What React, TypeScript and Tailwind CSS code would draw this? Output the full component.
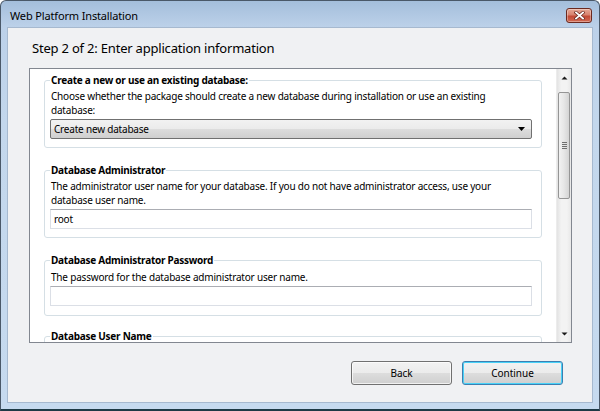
import React from "react";

const font = "font-['Noto_Sans',_'Liberation_Sans',_sans-serif]";

function CloseButton() {
  return (
    <div className="w-[26px] h-[15px] rounded-[3px] border border-[#6b2a20] bg-[linear-gradient(to_bottom,#e6a896_0%,#d8826e_45%,#c24a36_55%,#d26a52_100%)] flex items-center justify-center shadow-[inset_0_0_0_1px_rgba(255,255,255,0.35)]">
      <svg width="11" height="9" viewBox="0 0 11 9">
        <path d="M2 1.5 L9 7.5 M9 1.5 L2 7.5" stroke="#6b2a20" strokeWidth="3.2" strokeLinecap="square" />
        <path d="M2 1.5 L9 7.5 M9 1.5 L2 7.5" stroke="#ffffff" strokeWidth="1.8" strokeLinecap="square" />
      </svg>
    </div>
  );
}

function Scrollbar() {
  return (
    <div className="w-[15px] flex flex-col bg-[linear-gradient(to_right,#e3e3e3,#f3f3f3_30%,#f3f3f3_70%,#e8e8e8)] border-l border-[#ececec]">
      <div className="h-[17px] flex items-center justify-center">
        <svg width="7" height="4" viewBox="0 0 7 4">
          <path d="M0.5 3.5 L3.5 0.5 L6.5 3.5 Z" fill="#1a1a1a" />
        </svg>
      </div>
      <div className="mt-[6px] mx-[1px] h-[107px] rounded-[2px] border border-[#959595] bg-[linear-gradient(to_right,#f2f2f2,#e6e6e6_50%,#d4d4d4)] flex flex-col items-center justify-center gap-[1px]">
        <div className="w-[5px] h-[1px] bg-[#6f6f6f]" />
        <div className="w-[5px] h-[1px] bg-[#6f6f6f]" />
        <div className="w-[5px] h-[1px] bg-[#6f6f6f]" />
        <div className="w-[5px] h-[1px] bg-[#6f6f6f]" />
      </div>
      <div className="flex-1" />
      <div className="h-[17px] flex items-center justify-center">
        <svg width="7" height="4" viewBox="0 0 7 4">
          <path d="M0.5 0.5 L6.5 0.5 L3.5 3.5 Z" fill="#1a1a1a" />
        </svg>
      </div>
    </div>
  );
}

function Group({
  title,
  desc,
  children,
  className = "",
  descClass = "mt-[2px]",
}: {
  title: string;
  desc?: React.ReactNode;
  children?: React.ReactNode;
  className?: string;
  descClass?: string;
}) {
  return (
    <fieldset
      className={`border border-[#d5dfe5] rounded-[3px] pl-[5px] pr-[9px] shadow-[inset_0_0_0_1px_#ffffff] ${className}`}
    >
      <legend className="px-[1px] text-[10px] leading-[14px] font-bold tracking-[-0.25px] text-black">{title}</legend>
      {desc && (
        <div className={`pl-[1px] text-[10px] leading-[14px] tracking-[-0.2px] text-black ${descClass}`}>{desc}</div>
      )}
      {children}
    </fieldset>
  );
}

function TextBox({ value }: { value?: string }) {
  return (
    <div className="mt-[2px] h-[20px] bg-white border border-[#dbdfe6] border-t-[#abadb3] pl-[3px] flex items-center text-[10px] tracking-[-0.2px] text-black">
      {value}
    </div>
  );
}

export default function App() {
  return (
    <div
      className={`${font} w-[600px] h-[411px] flex flex-col rounded-t-[6px] border border-[#4a5868] border-b-[#1e3a46] border-b-2 bg-[linear-gradient(to_bottom,#a4bedb_0px,#bcd1e9_26px,#c3d7ec_120px,#c6daef_100%)] overflow-hidden`}
    >
      {/* Title bar */}
      <div className="h-[26px] pt-[3px] pl-[9px] pr-[7px] flex items-center justify-between shrink-0">
        <span className="text-[11px] leading-[14px] tracking-[-0.15px] text-black">Web Platform Installation</span>
        <CloseButton />
      </div>

      {/* Client area */}
      <div className="mx-[6px] mb-[6px] flex-1 bg-[#f0f1f3] border border-[#a6b9cf] flex flex-col">
        <div className="pl-[24px] pt-[10px] text-[13px] leading-[20px] tracking-[-0.2px] text-black">
          Step 2 of 2: Enter application information
        </div>

        <div className="ml-[21px] mr-[20px] mt-[10px] h-[275px] border border-[#828790] bg-white flex overflow-hidden">
          <div className="flex-1 pl-[14px] pr-[14px] pt-[4px] overflow-hidden">
            <Group
              className="pb-[8px]"
              title="Create a new or use an existing database:"
              desc={
                <>
                  Choose whether the package should create a new database during installation or use an existing
                  <br />
                  database:
                </>
              }
            >
              <div className="mt-[2px] h-[20px] rounded-[2px] border border-[#707070] bg-[linear-gradient(to_bottom,#f2f2f2_0%,#ebebeb_50%,#dddddd_50%,#cfcfcf_100%)] pl-[3px] pr-[6px] flex items-center justify-between text-[10px] tracking-[-0.2px] text-black">
                <span>Create new database</span>
                <svg width="7" height="4" viewBox="0 0 7 4">
                  <path d="M0 0 L7 0 L3.5 4 Z" fill="#000" />
                </svg>
              </div>
            </Group>

            <Group
              className="mt-[15px] pb-[8px]"
              title="Database Administrator"
              desc={
                <>
                  The administrator user name for your database. If you do not have administrator access, use your
                  <br />
                  database user name.
                </>
              }
            >
              <TextBox value="root" />
            </Group>

            <Group
              className="mt-[15px] pb-[9px]"
              descClass="mt-[3px]"
              title="Database Administrator Password"
              desc="The password for the database administrator user name."
            >
              <TextBox />
            </Group>

            <Group className="mt-[13px] pb-[8px]" title="Database User Name">
              <div className="h-[40px]" />
            </Group>
          </div>
          <Scrollbar />
        </div>

        <div className="mt-[18px] pr-[29px] flex justify-end gap-[10px]">
          <div className="w-[101px] h-[24px] rounded-[3px] border border-[#707070] bg-[linear-gradient(to_bottom,#f2f2f2_0%,#ebebeb_50%,#dddddd_50%,#cfcfcf_100%)] shadow-[inset_0_0_0_1px_rgba(255,255,255,0.7)] flex items-center justify-center text-[10px] text-black">
            Back
          </div>
          <div className="w-[101px] h-[24px] rounded-[3px] border border-[#3c7fb1] bg-[linear-gradient(to_bottom,#f2f2f2_0%,#ebebeb_50%,#dddddd_50%,#cfcfcf_100%)] shadow-[inset_0_0_0_1px_#48d2f8] flex items-center justify-center text-[10px] text-black">
            Continue
          </div>
        </div>
      </div>
    </div>
  );
}
